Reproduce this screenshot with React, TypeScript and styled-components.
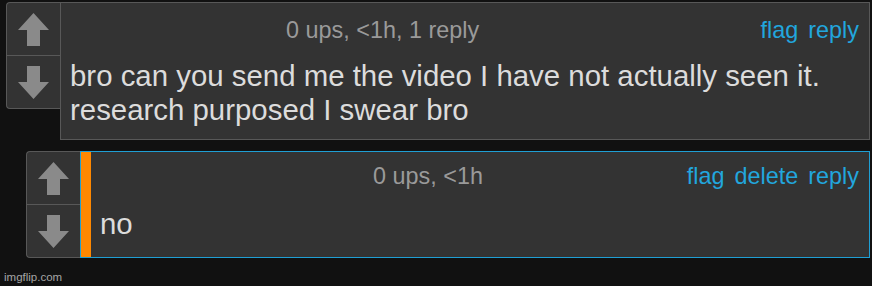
import React from "react";
import styled, { createGlobalStyle } from "styled-components";

const Global = createGlobalStyle`
  html, body { margin: 0; padding: 0; background: #111111; }
  body { font-family: "Liberation Sans", Arial, sans-serif; }
`;

const Page = styled.div`
  width: 872px;
  height: 286px;
  box-sizing: border-box;
  padding: 2px 2px 0 4px;
  display: flex;
  flex-direction: column;
  overflow: hidden;
`;

const Row = styled.div<{ $indent: number; $top: number }>`
  display: flex;
  align-items: flex-start;
  margin-left: ${(p) => p.$indent}px;
  margin-top: ${(p) => p.$top}px;
`;

const VoteBox = styled.div`
  flex: none;
  width: 53px;
  display: flex;
  flex-direction: column;
  background: #333333;
  border: 1px solid #585858;
  border-right: none;
  border-radius: 4px 0 0 4px;
`;

const VoteBtn = styled.div<{ $divider?: boolean }>`
  height: 52px;
  display: flex;
  align-items: center;
  justify-content: center;
  border-bottom: ${(p) => (p.$divider ? "1px solid #585858" : "none")};
`;

const CommentBox = styled.div`
  flex: 1;
  background: #333333;
  border: 1px solid #585858;
  padding: 14px 10px 12px 9px;
`;

const ReplyBox = styled.div`
  flex: 1;
  display: flex;
  box-sizing: border-box;
  min-height: 107px;
  background: #333333;
  border: 1px solid #1f9fd4;
`;

const MarkBar = styled.div`
  flex: none;
  width: 10px;
  background: #ff8800;
`;

const ReplyContent = styled.div`
  flex: 1;
  padding: 11px 10px 0 9px;
`;

const Header = styled.div`
  display: flex;
  align-items: center;
  font-size: 23.4px;
  line-height: 26px;
  height: 26px;
`;

const Meta = styled.span<{ $offset: number }>`
  color: #9a9a9a;
  margin-left: ${(p) => p.$offset}px;
  white-space: nowrap;
`;

const Actions = styled.div`
  margin-left: auto;
  display: flex;
  gap: 10px;
`;

const ActionLink = styled.a`
  color: #22a6dd;
  text-decoration: none;
  cursor: pointer;
`;

const Body = styled.div<{ $gap: number }>`
  margin-top: ${(p) => p.$gap}px;
  color: #dcdcdc;
  font-size: 29.4px;
  line-height: 34px;
`;

const Footer = styled.div`
  margin-top: 13px;
  color: #a5a5a5;
  font-size: 11.5px;
  line-height: 13px;
`;

const Arrow = ({ down }: { down?: boolean }) => (
  <svg width="31" height="33" viewBox="0 0 31 33" style={{ transform: down ? "rotate(180deg)" : undefined }}>
    <polygon points="15.5,0 31,17 22,17 22,33 9,33 9,17 0,17" fill="#8a8a8a" />
  </svg>
);

const Votes = () => (
  <VoteBox>
    <VoteBtn $divider>
      <Arrow />
    </VoteBtn>
    <VoteBtn>
      <Arrow down />
    </VoteBtn>
  </VoteBox>
);

export default function App() {
  return (
    <>
      <Global />
      <Page>
        <Row $indent={2} $top={0}>
          <Votes />
          <CommentBox>
            <Header>
              <Meta $offset={216}>0 ups, &lt;1h, 1 reply</Meta>
              <Actions>
                <ActionLink>flag</ActionLink>
                <ActionLink>reply</ActionLink>
              </Actions>
            </Header>
            <Body $gap={16}>
              bro can you send me the video I have not actually seen it.
              <br />
              research purposed I swear bro
            </Body>
          </CommentBox>
        </Row>
        <Row $indent={22} $top={11}>
          <Votes />
          <ReplyBox>
            <MarkBar />
            <ReplyContent>
              <Header>
                <Meta $offset={273}>0 ups, &lt;1h</Meta>
                <Actions>
                  <ActionLink>flag</ActionLink>
                  <ActionLink>delete</ActionLink>
                  <ActionLink>reply</ActionLink>
                </Actions>
              </Header>
              <Body $gap={18}>no</Body>
            </ReplyContent>
          </ReplyBox>
        </Row>
        <Footer>imgflip.com</Footer>
      </Page>
    </>
  );
}
